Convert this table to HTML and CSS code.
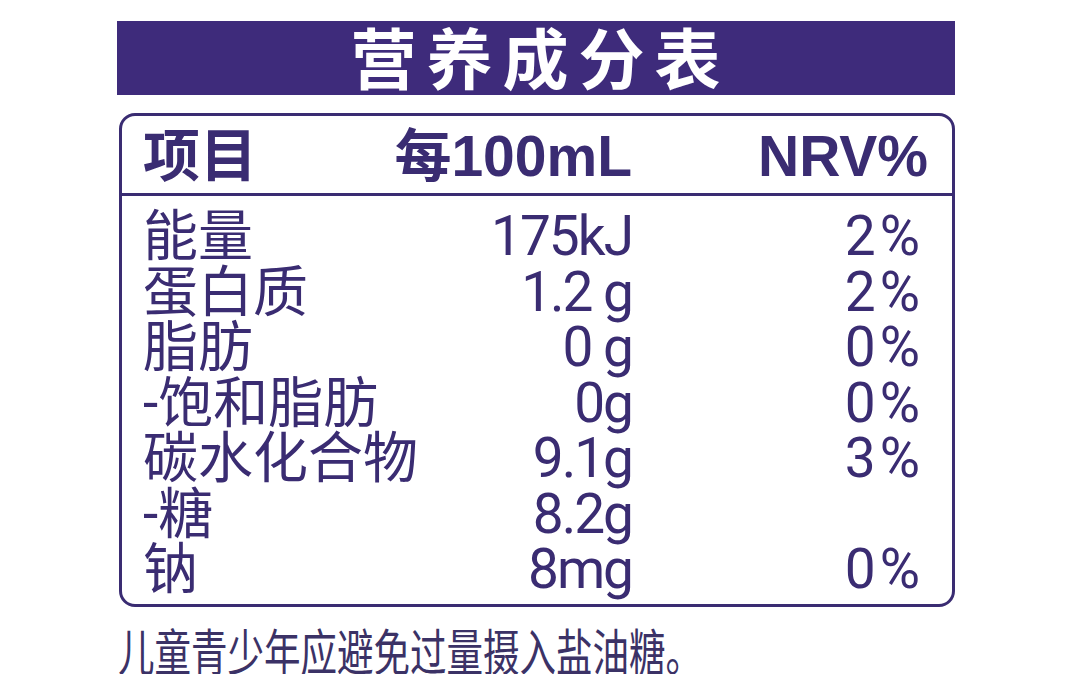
FILE: index.html
```html
<!DOCTYPE html>
<html lang="zh-CN">
<head>
<meta charset="UTF-8">
<meta name="viewport" content="width=device-width, initial-scale=1.0">
<title>营养成分表</title>
<link rel="stylesheet" href="styles.css">
</head>
<body>

<section class="label">
    <h1 class="title">营养成分表</h1>

    <div class="facts">
        <div class="facts-head">
            <span>项目</span>
            <span class="num">每100mL</span>
            <span class="num">NRV%</span>
        </div>
        <div class="facts-body">
            <span>能量</span><span class="num">175kJ</span><span class="num nrv">2%</span>
            <span>蛋白质</span><span class="num">1.2 g</span><span class="num nrv">2%</span>
            <span>脂肪</span><span class="num">0 g</span><span class="num nrv">0%</span>
            <span>-饱和脂肪</span><span class="num">0g</span><span class="num nrv">0%</span>
            <span>碳水化合物</span><span class="num">9.1g</span><span class="num nrv">3%</span>
            <span>-糖</span><span class="num">8.2g</span><span class="num nrv"></span>
            <span>钠</span><span class="num">8mg</span><span class="num nrv">0%</span>
        </div>
    </div>

    <p class="note">儿童青少年应避免过量摄入盐油糖。</p>
</section>

</body>
</html>
```

FILE: styles.css
```css
body {
    margin: 0;
    background-color: #ffffff;
    font-family: "Noto Sans CJK SC", sans-serif;
    color: #3a2c72;
}

.label {
    width: 838px;
    padding: 21px 0 0 117px;
}

.title {
    box-sizing: border-box;
    margin: 0;
    height: 74px;
    padding: 0 0 6px 9px;
    line-height: 68px;
    background-color: #3e2b7b;
    color: #ffffff;
    text-align: center;
    font-size: 66px;
    font-weight: 700;
    letter-spacing: 10px;
}

.facts {
    box-sizing: border-box;
    width: 836px;
    height: 494px;
    margin: 18px 0 0 2px;
    border: 3px solid #3a2c72;
    border-radius: 16px;
}

.facts-head,
.facts-body {
    display: grid;
    grid-template-columns: 237px 252px 296px;
    padding: 0 24px 0 21px;
    white-space: nowrap;
}

.facts-head {
    box-sizing: border-box;
    height: 80px;
    align-items: center;
    padding-top: 4px;
    border-bottom: 3px solid #3a2c72;
    font-family: "Liberation Sans", "Noto Sans CJK SC", sans-serif;
    font-size: 57px;
    font-weight: 700;
    line-height: 1;
}

.facts-body {
    padding-top: 13px;
    font-family: "Roboto", "Noto Sans CJK SC", sans-serif;
    font-size: 55px;
    line-height: 55.5px;
}

.num {
    text-align: right;
    letter-spacing: -2px;
}

.facts-head .num {
    letter-spacing: 0;
}

.facts-body .nrv {
    letter-spacing: 4px;
    padding-right: 4px;
}

.note {
    margin: 17px 0 0 1px;
    font-size: 50px;
    line-height: 50px;
    color: #3b3266;
    white-space: nowrap;
    transform: scaleX(0.73);
    transform-origin: left center;
}
```
